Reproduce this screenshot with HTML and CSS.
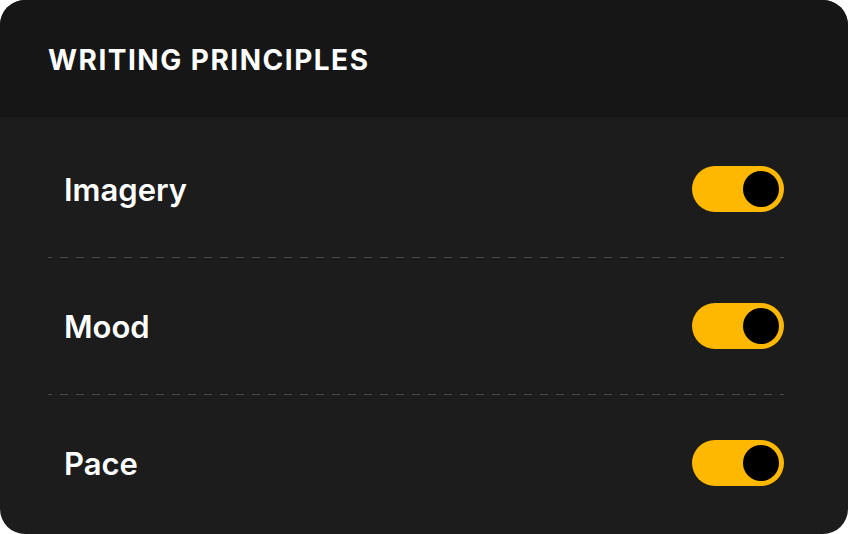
FILE: index.html
```html
<!DOCTYPE html>
<html lang="en">
<head>
<meta charset="utf-8">
<title>Writing Principles</title>
<link rel="stylesheet" href="styles.css">
</head>
<body>
  <section class="card">
    <header class="card-header">
      <h1 class="card-title">WRITING PRINCIPLES</h1>
    </header>
    <div class="card-body">
      <div class="row">
        <span class="label">Imagery</span>
        <span class="toggle" role="switch" aria-checked="true"><span class="knob"></span></span>
      </div>
      <div class="divider"></div>
      <div class="row">
        <span class="label">Mood</span>
        <span class="toggle" role="switch" aria-checked="true"><span class="knob"></span></span>
      </div>
      <div class="divider"></div>
      <div class="row">
        <span class="label">Pace</span>
        <span class="toggle" role="switch" aria-checked="true"><span class="knob"></span></span>
      </div>
    </div>
  </section>
</body>
</html>
```

FILE: styles.css
```css
html, body {
  margin: 0;
  padding: 0;
  background: #ffffff;
}

.card {
  width: 848px;
  height: 534px;
  border-radius: 25px;
  overflow: hidden;
  background: #1c1c1c;
  display: flex;
  flex-direction: column;
}

.card-header {
  height: 117px;
  background: #161616;
  display: flex;
  align-items: center;
  padding-left: 48px;
  box-sizing: border-box;
}

.card-title {
  margin: 0;
  color: #ffffff;
  font-family: Inter, "Liberation Sans", sans-serif;
  font-weight: 700;
  font-size: 28px;
  letter-spacing: 1.5px;
  line-height: 1;
  padding-top: 2px;
}

.card-body {
  flex: 1;
  display: flex;
  flex-direction: column;
  padding: 4px 64px 0 48px;
}

.row {
  height: 136px;
  display: flex;
  align-items: center;
  justify-content: space-between;
}

.label {
  padding-left: 16px;
  color: #ffffff;
  font-family: Inter, "Liberation Sans", sans-serif;
  font-weight: 600;
  font-size: 31px;
}

.divider {
  height: 1px;
  background: repeating-linear-gradient(to right, #4a4a4a 0 8px, transparent 8px 16px);
  background-position: -4px 0;
}

.toggle {
  width: 92px;
  height: 46px;
  border-radius: 23px;
  background: #ffb800;
  display: flex;
  align-items: center;
  justify-content: flex-end;
  padding-right: 5px;
  box-sizing: border-box;
}

.knob {
  width: 36px;
  height: 36px;
  border-radius: 50%;
  background: #000000;
}
```
